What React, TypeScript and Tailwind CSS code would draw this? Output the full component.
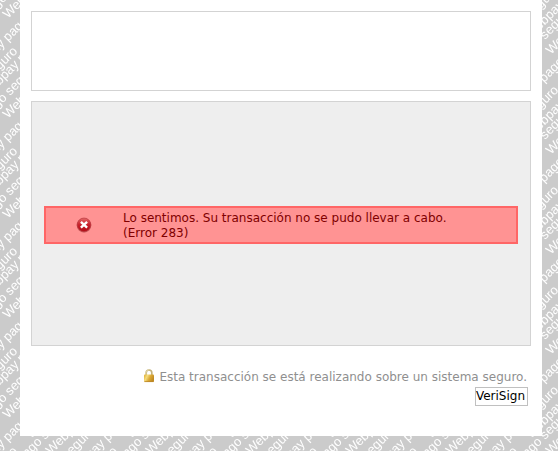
const PHRASE = "Webpay pago seguro";

const LINE_STARTS = [
  { x: 31, y: 39 },
  { x: -14, y: 99 },
  { x: 51, y: 55 },
  { x: 8, y: 119 },
  { x: -28, y: 78 },
];

const SHIFTS = [-100, 0, 100];

function Backdrop() {
  return (
    <svg aria-hidden="true" className="absolute inset-0 h-full w-full">
      <defs>
        <pattern id="webpay" width="100" height="100" patternUnits="userSpaceOnUse">
          <rect width="100" height="100" fill="#cbcbcb" />
          <g fill="#ffffff" fontSize="13" fontFamily="'Liberation Sans', Arial, sans-serif">
            {LINE_STARTS.map((p) =>
              SHIFTS.map((dx) =>
                SHIFTS.map((dy) => (
                  <text
                    key={`${p.x}:${dx}:${dy}`}
                    transform={`translate(${p.x + dx} ${p.y + dy}) rotate(-45)`}
                  >
                    {PHRASE}
                  </text>
                )),
              ),
            )}
          </g>
        </pattern>
      </defs>
      <rect width="100%" height="100%" fill="url(#webpay)" />
    </svg>
  );
}

function ErrorIcon() {
  return (
    <svg aria-hidden="true" width="16" height="16" viewBox="0 0 16 16">
      <defs>
        <linearGradient id="errorFill" x1="0" y1="0" x2="0" y2="1">
          <stop offset="0" stopColor="#e46a6a" />
          <stop offset="0.5" stopColor="#c8202a" />
          <stop offset="1" stopColor="#b00c16" />
        </linearGradient>
      </defs>
      <circle cx="8" cy="8.4" r="7.3" fill="#7a1a1a" opacity="0.4" />
      <circle cx="8" cy="7.8" r="6.8" fill="url(#errorFill)" stroke="#b8323a" strokeWidth="0.6" />
      <path d="M4.9 4.9l6.2 5.8M11.1 4.9l-6.2 5.8" stroke="#fff" strokeWidth="2.4" />
    </svg>
  );
}

function LockIcon() {
  return (
    <svg aria-hidden="true" width="12" height="16" viewBox="0 0 12 16">
      <defs>
        <linearGradient id="lockFill" x1="0" y1="0" x2="1" y2="0.4">
          <stop offset="0" stopColor="#dba92c" />
          <stop offset="0.35" stopColor="#f5dc7c" />
          <stop offset="0.65" stopColor="#dba935" />
          <stop offset="1" stopColor="#c08a22" />
        </linearGradient>
      </defs>
      <path d="M3.2 7V3.8a2.8 2.8 0 0 1 5.6 0V7" fill="none" stroke="#c4b27a" strokeWidth="1.7" />
      <path d="M3 6.5V3.8a3 3 0 0 1 3-3" fill="none" stroke="#e6dcae" strokeWidth="0.8" />
      <rect x="1" y="5.5" width="10" height="7.5" rx="1" fill="url(#lockFill)" />
      <path d="M1.4 12.6h9.2" stroke="#b9852a" strokeWidth="0.8" />
    </svg>
  );
}

export default function App() {
  return (
    <div className="relative min-h-screen bg-[#cbcbcb] pr-4 pb-[15px] pl-5 font-['DejaVu_Sans',Verdana,sans-serif] text-xs">
      <Backdrop />
      <main className="relative bg-white px-[11px] pt-[11px] pb-[30px]">
        <header className="h-20 border border-[#d3d3d3]" />
        <section className="mt-2.5 border border-[#d3d3d3] bg-[#eeeeee] px-3 pt-[104px] pb-[101px]">
          <div
            role="alert"
            className="flex items-center border-2 border-[#ff6666] bg-[#ff9393] pt-[3px] pb-px leading-[15px] text-[#800000]"
          >
            <div className="flex w-[77px] shrink-0 pb-0.5 pl-[30px]">
              <ErrorIcon />
            </div>
            <p>
              Lo sentimos. Su transacción no se pudo llevar a cabo.
              <br />
              (Error 283)
            </p>
          </div>
        </section>
        <footer className="flex flex-col items-end pt-[21px]">
          <p className="flex items-center gap-1 pr-1 leading-5 text-[#8f8f8f]">
            <LockIcon />
            Esta transacción se está realizando sobre un sistema seguro.
          </p>
          <div className="mr-[3px] border border-[#c0c0c0] pr-0.5 leading-[17px] text-black">
            VeriSign
          </div>
        </footer>
      </main>
    </div>
  );
}
